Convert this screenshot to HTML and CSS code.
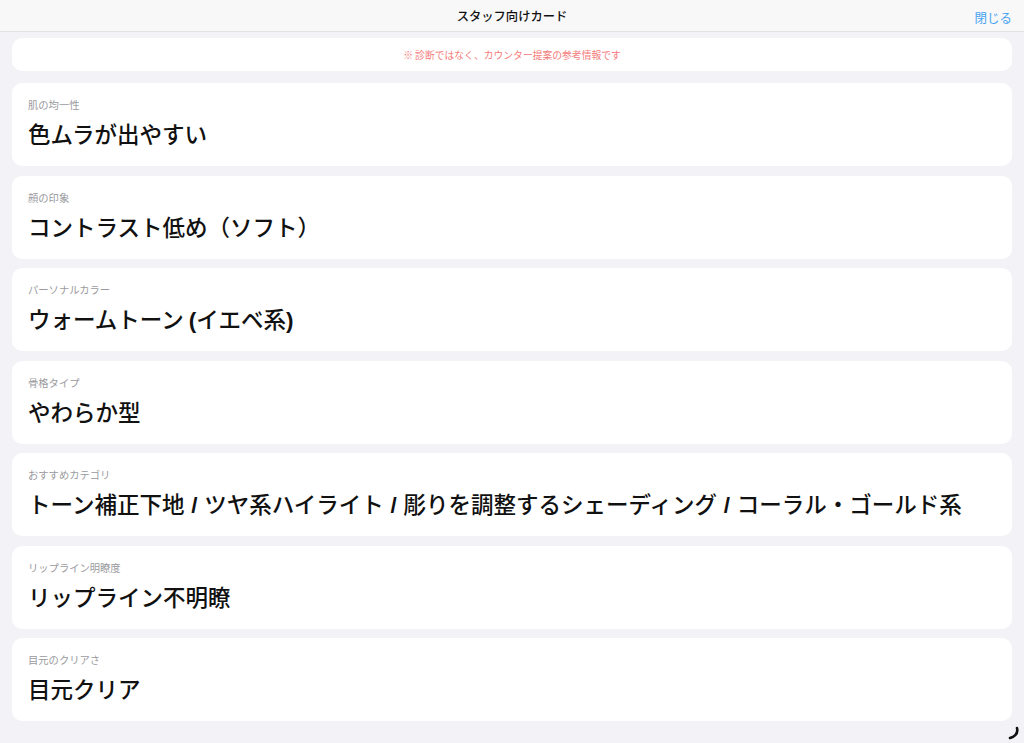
FILE: index.html
```html
<!DOCTYPE html>
<html lang="ja">
<head>
<meta charset="utf-8">
<link rel="stylesheet" href="styles.css">
</head>
<body>
<header class="bar">
  <div class="bar-title">スタッフ向けカード</div>
  <button class="bar-close">閉じる</button>
</header>
<main class="list">
  <div class="card notice">※ 診断ではなく、カウンター提案の参考情報です</div>
  <div class="card item"><div class="label">肌の均一性</div><div class="value">色ムラが出やすい</div></div>
  <div class="card item"><div class="label">顔の印象</div><div class="value">コントラスト低め（ソフト）</div></div>
  <div class="card item"><div class="label">パーソナルカラー</div><div class="value">ウォームトーン <span class="latin">(</span>イエベ系<span class="latin">)</span></div></div>
  <div class="card item"><div class="label">骨格タイプ</div><div class="value">やわらか型</div></div>
  <div class="card item"><div class="label">おすすめカテゴリ</div><div class="value">トーン補正下地 <span class="latin slash">/</span> ツヤ系ハイライト <span class="latin slash">/</span> 彫りを調整するシェーディング <span class="latin slash">/</span> コーラル・ゴールド系</div></div>
  <div class="card item"><div class="label">リップライン明瞭度</div><div class="value">リップライン不明瞭</div></div>
  <div class="card item"><div class="label">目元のクリアさ</div><div class="value">目元クリア</div></div>
</main>
<svg class="corner" width="14" height="14" viewBox="0 0 14 14"><path d="M11 2 C12 6 10 10 4 12" fill="none" stroke="#111" stroke-width="2.6" stroke-linecap="round"/></svg>
</body>
</html>
```
FILE: styles.css
```css
html, body {
  margin: 0;
  padding: 0;
}
body {
  width: 1024px;
  height: 743px;
  overflow: hidden;
  background: #f2f2f7;
  font-family: "Noto Sans CJK JP", "Noto Sans", sans-serif;
  color: #111;
  position: relative;
}
.bar {
  height: 32px;
  background: #f8f8f9;
  border-bottom: 1px solid #e2e2e6;
  display: flex;
  align-items: center;
  justify-content: center;
  position: relative;
  box-sizing: border-box;
}
.bar-title {
  font-size: 12.3px;
  font-weight: 500;
  color: #111;
}
.bar-close {
  position: absolute;
  right: 12px;
  top: 8px;
  border: none;
  background: none;
  padding: 0;
  font-family: inherit;
  font-size: 12.5px;
  color: #4aa3f0;
}
.list {
  padding: 6px 12px 0;
  display: flex;
  flex-direction: column;
  gap: 9.5px;
}
.card {
  background: #fff;
  border-radius: 10px;
}
.notice {
  height: 33px;
  display: flex;
  align-items: center;
  justify-content: center;
  font-size: 9.8px;
  color: #f47a7a;
  margin-bottom: 2.5px;
}
.item {
  height: 83px;
  box-sizing: border-box;
  padding: 16px 16px 0;
}
.label {
  font-size: 10.3px;
  line-height: 12px;
  color: #9a9a9e;
}
.value {
  margin-top: 7px;
  font-size: 22.5px;
  line-height: 30px;
  font-weight: 500;
  color: #111;
  white-space: nowrap;
}
.latin {
  font-family: "Liberation Sans", "Noto Sans", sans-serif;
  font-weight: 700;
}
.slash {
  margin: 0 1.7px;
}
.corner {
  position: absolute;
  right: 4px;
  bottom: 3px;
}
```
